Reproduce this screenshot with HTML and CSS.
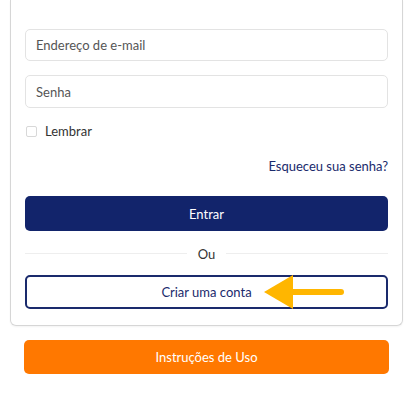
FILE: index.html
```html
<!DOCTYPE html>
<html lang="pt-BR">
<head>
<meta charset="UTF-8">
<meta name="viewport" content="width=device-width, initial-scale=1.0">
<title>Entrar</title>
<link rel="stylesheet" href="styles.css">
</head>
<body>

<div class="page">
    <!-- cartão de login -->
    <div class="card">
        <input class="field" type="email" placeholder="Endereço de e-mail">
        <input class="field" type="password" placeholder="Senha">

        <label class="remember">
            <span class="check"></span>
            Lembrar
        </label>

        <div class="forgot">
            <a href="#">Esqueceu sua senha?</a>
        </div>

        <button class="btn btn-primary">Entrar</button>

        <div class="divider"><span>Ou</span></div>

        <div class="create-wrap">
            <button class="btn btn-outline">Criar uma conta</button>
            <!-- seta amarela -->
            <svg class="arrow" width="80" height="36" viewBox="0 0 80 36">
                <polygon points="0,17 29,0 29,34" fill="#ffb600"/>
                <line x1="28" y1="17" x2="77" y2="17" stroke="#ffb600" stroke-width="6" stroke-linecap="round"/>
            </svg>
        </div>
    </div>

    <button class="btn btn-orange">Instruções de Uso</button>
</div>

</body>
</html>
```

FILE: styles.css
```css
body {
    margin: 0;
    font-family: Lato, "Liberation Sans", sans-serif;
    font-size: 13px;
    background-color: #fff;
    color: #333;
}
.page {
    padding: 0 9px 0 10px;
}
.card {
    display: flex;
    flex-direction: column;
    border: 1px solid #d6d6d6;
    border-top: none;
    border-radius: 0 0 6px 6px;
    padding: 29px 14px 16px 14px;
    box-shadow: 0 1px 2px rgba(0, 0, 0, 0.05);
}
.field {
    height: 32px;
    box-sizing: border-box;
    border: 1px solid #e3e3e3;
    border-radius: 5px;
    padding: 0 10px;
    font-family: inherit;
    font-size: 13px;
    color: #333;
    margin-bottom: 14px;
}
.field + .field {
    height: 33px;
    margin-bottom: 15px;
}
.field::placeholder {
    color: #555;
}
.remember {
    display: flex;
    align-items: center;
    gap: 8px;
    font-size: 13px;
    color: #333;
    height: 16px;
}
.check {
    width: 9px;
    height: 9px;
    border: 1px solid #d8d8d8;
    border-radius: 2px;
    margin-left: 1px;
}
.forgot {
    text-align: right;
    margin-top: 18px;
    font-size: 13px;
    line-height: 18px;
}
.forgot a {
    color: #1a2a6c;
    text-decoration: none;
}
.btn {
    display: block;
    width: 100%;
    box-sizing: border-box;
    font-family: inherit;
    font-size: 13px;
    border-radius: 5px;
    cursor: pointer;
}
.btn-primary {
    margin-top: 21px;
    height: 35px;
    background-color: #12246b;
    color: #fff;
    border: none;
}
.divider {
    display: flex;
    align-items: center;
    gap: 11px;
    margin: 14px 0 13px 0;
    font-size: 13px;
    color: #333;
    height: 17px;
}
.divider::before,
.divider::after {
    content: "";
    flex: 1;
    height: 1px;
    background-color: #eee;
}
.create-wrap {
    position: relative;
}
.btn-outline {
    height: 34px;
    background-color: #fff;
    color: #1a2a6c;
    border: 2px solid #1a2a6c;
}
.arrow {
    position: absolute;
    left: 239px;
    top: 0;
}
.btn-orange {
    margin: 14px 0 0 14px;
    width: calc(100% - 28px);
    height: 34px;
    background-color: #ff7800;
    color: #fff;
    border: none;
}
```
